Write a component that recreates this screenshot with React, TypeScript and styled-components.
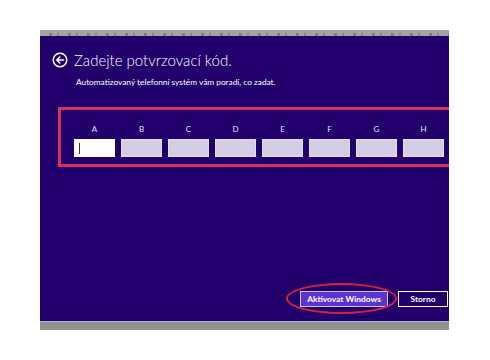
import styled, { createGlobalStyle } from "styled-components";

const GlobalStyle = createGlobalStyle`
  html, body {
    margin: 0;
    padding: 0;
    background: #ffffff;
  }
  body {
    font-family: "Lato", "Liberation Sans", sans-serif;
  }
`;

const letters = ["A", "B", "C", "D", "E", "F", "G", "H"];

export default function App() {
  return (
    <>
      <GlobalStyle />
      <Page>
        <Window>
          <TopStrip />
          <Panel>
            <Header>
              <BackIcon />
              <Title>Zadejte potvrzovací kód.</Title>
            </Header>
            <Subtitle>Automatizovaný telefonní systém vám poradí, co zadat.</Subtitle>
            <Frame>
              {letters.map((l, i) => (
                <Field key={l}>
                  <Label>{l}</Label>
                  <Box $active={i === 0}>{i === 0 && <Caret />}</Box>
                </Field>
              ))}
            </Frame>
            <Spacer />
            <Buttons>
              <Circled>
                <PrimaryButton>Aktivovat Windows</PrimaryButton>
                <Ellipse />
              </Circled>
              <SecondaryButton>Storno</SecondaryButton>
            </Buttons>
          </Panel>
          <BottomStrip />
        </Window>
      </Page>
    </>
  );
}

function BackIcon() {
  return (
    <svg width="16" height="16" viewBox="0 0 16 16">
      <circle cx="8" cy="8" r="6.8" fill="none" stroke="#ffffff" strokeWidth="1.5" />
      <path d="M11.5 8H5M7.8 5L4.8 8l3 3" fill="none" stroke="#ffffff" strokeWidth="1.6" strokeLinecap="round" strokeLinejoin="round" />
    </svg>
  );
}

const Page = styled.div`
  width: 490px;
  height: 360px;
  padding: 30px 0 0 40px;
  box-sizing: border-box;
`;

const Window = styled.div`
  width: 409px;
  display: flex;
  flex-direction: column;
`;

const TopStrip = styled.div`
  height: 6px;
  background:
    repeating-linear-gradient(90deg, transparent 0 9px, rgba(60, 60, 70, 0.35) 9px 12px, transparent 12px 17px, rgba(60, 60, 70, 0.25) 17px 19px) 0 3px / 100% 3px no-repeat,
    #a3a3a3;
`;

const Panel = styled.div`
  height: 285px;
  background: #21006b;
  overflow: hidden;
  display: flex;
  flex-direction: column;
  padding: 16px 0 14px 12px;
  box-sizing: border-box;
`;

const Header = styled.div`
  display: flex;
  align-items: center;
  gap: 6px;
  height: 16px;
`;

const Title = styled.div`
  color: #ffffff;
  font-size: 15px;
  font-weight: 300;
  white-space: nowrap;
`;

const Subtitle = styled.div`
  color: #ffffff;
  font-size: 8.3px;
  margin: 9px 0 0 24px;
  white-space: nowrap;
`;

const Frame = styled.div`
  margin: 20px 0 0 6px;
  width: 420px;
  height: 60px;
  flex-shrink: 0;
  box-sizing: border-box;
  border: 3px solid #d8315a;
  display: flex;
  gap: 6px;
  padding: 14px 0 0 13px;
`;

const Field = styled.div`
  display: flex;
  flex-direction: column;
  align-items: center;
  gap: 5px;
`;

const Label = styled.div`
  color: #e6e0f7;
  font-size: 8px;
  line-height: 10px;
`;

const Box = styled.div<{ $active?: boolean }>`
  width: 41px;
  height: 18px;
  box-sizing: border-box;
  border: 1px solid ${(p) => (p.$active ? "#ffffff" : "#e4def2")};
  background: ${(p) => (p.$active ? "#ffffff" : "#d3cde4")};
  display: flex;
  align-items: center;
  padding-left: 4px;
`;

const Caret = styled.div`
  width: 1px;
  height: 11px;
  background: #333333;
`;

const Spacer = styled.div`
  flex: 1;
`;

const Buttons = styled.div`
  display: flex;
  justify-content: flex-end;
  gap: 10px;
  padding-right: 1px;
`;

const Circled = styled.div`
  position: relative;
  display: flex;
`;

const ButtonBase = styled.div`
  height: 16px;
  box-sizing: border-box;
  display: flex;
  align-items: center;
  justify-content: center;
  color: #ffffff;
  font-size: 8.4px;
  font-weight: 700;
  white-space: nowrap;
`;

const PrimaryButton = styled(ButtonBase)`
  width: 88px;
  background: #5a33d1;
  border: 1px solid #cfc6f3;
`;

const SecondaryButton = styled(ButtonBase)`
  width: 50px;
  background: #21006b;
  border: 1px solid #ffffff;
`;

const Ellipse = styled.div`
  position: absolute;
  left: -14px;
  top: -8px;
  width: 111px;
  height: 31px;
  box-sizing: border-box;
  border: 2px solid #d8213f;
  border-radius: 50%;
  pointer-events: none;
`;

const BottomStrip = styled.div`
  height: 9px;
  background: #929292;
  border-top: 1px solid #b6b2c4;
  box-sizing: border-box;
`;
